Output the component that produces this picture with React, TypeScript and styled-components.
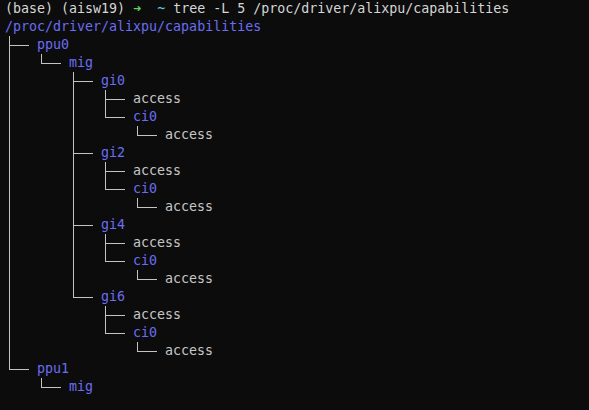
import React from "react";
import styled, { createGlobalStyle } from "styled-components";

const Global = createGlobalStyle`
  html, body { margin: 0; padding: 0; background: #0c0c0c; }
  body { width: 589px; height: 410px; overflow: hidden; }
`;

const Terminal = styled.div`
  box-sizing: border-box;
  width: 589px;
  height: 410px;
  background: #0c0c0c;
  padding: 0 0 0 5px;
  font-family: "DejaVu Sans Mono", "Liberation Mono", monospace;
  font-size: 13.3px;
  line-height: 18px;
  color: #d6d6d6;
  display: flex;
  flex-direction: column;
`;

const Line = styled.div`
  display: flex;
  align-items: center;
  height: 18px;
  white-space: pre;
`;

const Seg = styled.span<{ $c?: string }>`
  color: ${(p) => p.$c || "#d6d6d6"};
`;

type Kind = "pipe" | "tee" | "elbow" | "blank";

const Cell = styled.span<{ $kind: Kind }>`
  position: relative;
  flex: 0 0 32px;
  width: 32px;
  height: 18px;
  &::before {
    content: "";
    display: ${(p) => (p.$kind === "blank" ? "none" : "block")};
    position: absolute;
    left: 4px;
    top: 0;
    width: 1px;
    height: ${(p) => (p.$kind === "elbow" ? "10px" : "18px")};
    background: #c4c4c4;
  }
  &::after {
    content: "";
    display: ${(p) => (p.$kind === "tee" || p.$kind === "elbow" ? "block" : "none")};
    position: absolute;
    left: 4px;
    top: 9px;
    width: 20px;
    height: 1px;
    background: #c4c4c4;
  }
`;

const Name = styled.span<{ $dir: boolean }>`
  color: ${(p) => (p.$dir ? "#6b6df2" : "#c6c6c6")};
`;

type Row = { prefix: Kind[]; name: string; dir: boolean };

const rows: Row[] = [
  { prefix: ["tee"], name: "ppu0", dir: true },
  { prefix: ["pipe", "elbow"], name: "mig", dir: true },
  { prefix: ["pipe", "blank", "tee"], name: "gi0", dir: true },
  { prefix: ["pipe", "blank", "pipe", "tee"], name: "access", dir: false },
  { prefix: ["pipe", "blank", "pipe", "elbow"], name: "ci0", dir: true },
  { prefix: ["pipe", "blank", "pipe", "blank", "elbow"], name: "access", dir: false },
  { prefix: ["pipe", "blank", "tee"], name: "gi2", dir: true },
  { prefix: ["pipe", "blank", "pipe", "tee"], name: "access", dir: false },
  { prefix: ["pipe", "blank", "pipe", "elbow"], name: "ci0", dir: true },
  { prefix: ["pipe", "blank", "pipe", "blank", "elbow"], name: "access", dir: false },
  { prefix: ["pipe", "blank", "tee"], name: "gi4", dir: true },
  { prefix: ["pipe", "blank", "pipe", "tee"], name: "access", dir: false },
  { prefix: ["pipe", "blank", "pipe", "elbow"], name: "ci0", dir: true },
  { prefix: ["pipe", "blank", "pipe", "blank", "elbow"], name: "access", dir: false },
  { prefix: ["pipe", "blank", "elbow"], name: "gi6", dir: true },
  { prefix: ["pipe", "blank", "blank", "tee"], name: "access", dir: false },
  { prefix: ["pipe", "blank", "blank", "elbow"], name: "ci0", dir: true },
  { prefix: ["pipe", "blank", "blank", "blank", "elbow"], name: "access", dir: false },
  { prefix: ["elbow"], name: "ppu1", dir: true },
  { prefix: ["blank", "elbow"], name: "mig", dir: true },
];

export default function App() {
  return (
    <>
      <Global />
      <Terminal>
        <Line>
          <Seg>(base) (aisw19) </Seg>
          <Seg $c="#5fd35f">➜</Seg>
          <Seg>  </Seg>
          <Seg $c="#5fc8d8">~</Seg>
          <Seg> tree -L 5 /proc/driver/alixpu/capabilities</Seg>
        </Line>
        <Line>
          <Name $dir>/proc/driver/alixpu/capabilities</Name>
        </Line>
        {rows.map((r, i) => (
          <Line key={i}>
            {r.prefix.map((k, j) => (
              <Cell key={j} $kind={k} />
            ))}
            <Name $dir={r.dir}>{r.name}</Name>
          </Line>
        ))}
      </Terminal>
    </>
  );
}
